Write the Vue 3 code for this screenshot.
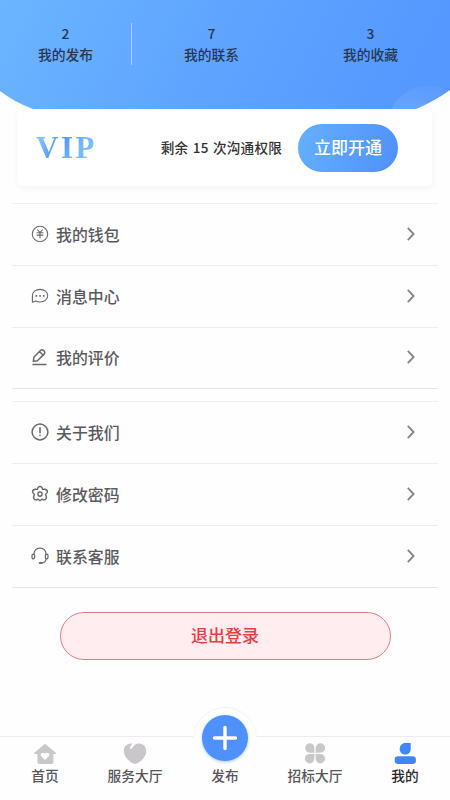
<script setup>
const stats = [
  { value: 2, label: '我的发布' },
  { value: 7, label: '我的联系' },
  { value: 3, label: '我的收藏' },
]
const groups = [
  [
    { icon: 'wallet', label: '我的钱包' },
    { icon: 'message', label: '消息中心' },
    { icon: 'edit', label: '我的评价' },
  ],
  [
    { icon: 'about', label: '关于我们' },
    { icon: 'gear', label: '修改密码' },
    { icon: 'service', label: '联系客服' },
  ],
]
const tabs = [
  { icon: 'home', label: '首页' },
  { icon: 'heart', label: '服务大厅' },
  { icon: 'plus', label: '发布' },
  { icon: 'clover', label: '招标大厅' },
  { icon: 'user', label: '我的', active: true },
]
</script>

<template>
  <div class="page">
    <header class="hero">
      <svg class="hero-bg" width="450" height="109" viewBox="0 0 450 109">
        <defs>
          <linearGradient id="sky" x1="0" y1="0" x2="1" y2="0.12">
            <stop offset="0" stop-color="#6bb5ff" />
            <stop offset="0.5" stop-color="#5fa5ff" />
            <stop offset="1" stop-color="#5598ff" />
          </linearGradient>
          <linearGradient id="bubble" x1="0.5" y1="0" x2="0.3" y2="0.6">
            <stop offset="0" stop-color="#fff" stop-opacity="0.04" />
            <stop offset="1" stop-color="#fff" stop-opacity="0.16" />
          </linearGradient>
          <clipPath id="bowl"><path d="M0 0H450V90Q435 101 416 109H33Q14 102 0 91Z" /></clipPath>
        </defs>
        <g clip-path="url(#bowl)">
          <rect width="450" height="109" fill="url(#sky)" />
          <circle cx="428" cy="127" r="41" fill="url(#bubble)" />
        </g>
      </svg>
      <div v-for="s in stats" :key="s.label" class="stat">
        <span>{{ s.value }}</span>
        <span>{{ s.label }}</span>
      </div>
    </header>

    <section class="vip">
      <span class="vip-logo">VIP</span>
      <span class="vip-text">剩余 15 次沟通权限</span>
      <button class="vip-btn">立即开通</button>
    </section>

    <nav v-for="(group, i) in groups" :key="i" class="menu">
      <div v-for="item in group" :key="item.icon" class="row">
        <svg class="row-icon" width="18" height="18" viewBox="0 0 18 18">
          <g v-if="item.icon === 'wallet'" stroke-width="1.1">
            <circle cx="9" cy="9" r="7.7" />
            <path d="M6.6 4.9L9 7.5l2.4-2.6M6 7.7h6M6 10.1h6M9 7.5v5.3" />
          </g>
          <g v-else-if="item.icon === 'message'" stroke-width="1.1">
            <path d="M1.4 15.2V8.8C1.4 5 4.5 2.4 9 2.4s7.7 2.7 7.7 6.3-3.2 6.3-7.7 6.3c-1.8 0-3-.4-4.4-1.1z" />
            <path d="M5.3 8.9h.1M9 8.9h.1M12.7 8.9h.1" stroke-width="1.8" />
          </g>
          <g v-else-if="item.icon === 'edit'" stroke-width="1.5">
            <path d="M2.3 13.3l.6-4 6.8-7q1.3-1.1 2.7.1l.9.9q1.1 1.3 0 2.6l-6.9 6.8zM8.7 3.8l3.7 3.5M2 16.6h12.8" />
          </g>
          <g v-else-if="item.icon === 'about'" stroke-width="1.5">
            <circle cx="9" cy="9" r="7.9" />
            <path d="M9 4.9v4.8M9 12.3v.2" stroke-width="1.6" />
          </g>
          <g v-else-if="item.icon === 'gear'" stroke-width="1.4">
            <path d="M7 2.4Q9 .4 11 2.4l.5 2 2.2-.1q3 .4 2.7 3.1l-1.8 2 .8 2.3q.3 2.9-2.5 3.4l-2-.9L9 15.7l-1.9-1.5-2 .9q-2.8-.5-2.5-3.4l.8-2.3-1.8-2q-.3-2.7 2.7-3.1l2.2.1z" />
            <circle cx="9" cy="9.1" r="2.1" />
          </g>
          <g v-else stroke-width="1.2">
            <path d="M2.8 7.3C3.2 3.5 5.7 1.2 9 1.2s5.8 2.3 6.2 6.1M15.2 11.8c-.5 2.6-2.2 4-4.7 4.2" />
            <rect x="1" y="7.2" width="2.6" height="4.7" rx="1.3" />
            <rect x="14.4" y="7.2" width="2.6" height="4.7" rx="1.3" />
            <path d="M8.8 16h1.8" stroke-width="2.2" />
          </g>
        </svg>
        <span class="row-label">{{ item.label }}</span>
        <svg class="chevron" width="10" height="16" viewBox="0 0 10 16"><path d="M1.8 1.8L7.6 8l-5.8 6.2" /></svg>
      </div>
    </nav>

    <button class="logout">退出登录</button>

    <footer class="tabs">
      <div v-for="t in tabs" :key="t.icon" class="tab" :class="{ active: t.active }">
        <svg v-if="t.icon === 'home'" class="tab-icon" viewBox="0 0 24 24">
          <path fill-rule="evenodd" d="M10.7 2.7q1.3-1.2 2.6 0l9.4 8.1q1 1.1-.4 1.2h-1.9v8.1q0 2-2 2H6.4q-2 0-2-2V12H1.8q-1.4-.1-.4-1.2zM12 18l3.7-3.7c2-2.5-1.5-5-3.7-2.6-2.2-2.4-5.7.1-3.7 2.6z" />
        </svg>
        <svg v-else-if="t.icon === 'heart'" class="tab-icon" viewBox="0 0 24 24">
          <path d="M9.6 1.6L7.2 5.1q-.7 1.6.5 1.8.9.1 1.6-1.1C11 2.9 13 1.5 16 1.5c4 0 7.3 3 7.3 7.2 0 6.2-5.4 11-10.2 13.1q-1.1.5-2.2 0C6 19.7.8 14.7.8 8.5c0-4.3 3.8-7.7 8.8-6.9z" />
        </svg>
        <svg v-else-if="t.icon === 'clover'" class="tab-icon" viewBox="-.5 0 25 25">
          <path d="M6.8 1.3a4.9 4.9 0 0 1 4.5 5v4.8H6.5a4.9 4.9 0 0 1 .3-9.8zM17.6 1.3a4.9 4.9 0 0 0-4.9 5v4.8h4.9a4.9 4.9 0 0 0 0-9.8zM11.3 12.5v4.7a4.9 4.9 0 1 1-4.8-4.7zM12.7 12.5v4.7a4.9 4.9 0 1 0 4.9-4.7z" />
        </svg>
        <svg v-else-if="t.icon === 'user'" class="tab-icon" viewBox="0 0 24 24">
          <path d="M12.5 1h5.2v5.7c0 3.5-2.2 5.9-5.5 5.9-3.2 0-5.5-2.4-5.5-5.7S9.2 1 12.5 1z" />
          <rect x="1.7" y="14.2" width="21.2" height="7.8" rx="3.3" />
        </svg>
        <span v-else class="publish">
          <svg width="46" height="46" viewBox="0 0 46 46"><path d="M23 12.5v21M12.5 23h21" /></svg>
        </span>
        <span class="tab-label">{{ t.label }}</span>
      </div>
    </footer>
  </div>
</template>

<style>
body {
  background: #fefefe;
}
</style>

<style scoped>
.page {
  width: 450px;
  height: 800px;
  box-sizing: border-box;
  display: flex;
  flex-direction: column;
  overflow: hidden;
  background: #fefefe;
  font-family: "Noto Sans CJK SC", sans-serif;
  font-weight: 500;
}
button {
  font-family: inherit;
  font-weight: 500;
  padding: 0;
}
.hero {
  position: relative;
  flex: none;
  height: 109px;
  box-sizing: border-box;
  padding-top: 23px;
  display: grid;
  grid-template-columns: 132px 159px 159px;
  align-items: start;
}
.hero-bg {
  position: absolute;
  top: 0;
  left: 0;
}
.stat {
  position: relative;
  height: 42px;
  display: flex;
  flex-direction: column;
  align-items: center;
  font-size: 13.8px;
  line-height: 20.5px;
  color: #26384d;
}
.stat:first-of-type {
  border-right: 1px solid #a8d2ff;
}
.vip {
  flex: none;
  height: 77px;
  box-sizing: border-box;
  margin: 0 18px;
  padding: 0 34px 0 18px;
  display: flex;
  align-items: center;
  border-radius: 0 0 5px 5px;
  background: #fff;
  box-shadow: 0 2px 7px rgba(80, 70, 110, 0.06);
  clip-path: inset(0 -12px -12px -12px);
}
.vip-logo {
  font-family: "Liberation Serif", serif;
  font-weight: 700;
  font-size: 31px;
  line-height: 36px;
  letter-spacing: 2.5px;
  background: linear-gradient(120deg, #82c4fa 10%, #5796f5 40%, #74b7fa 65%, #8bc2f8);
  background-clip: text;
  color: transparent;
}
.vip-text {
  margin-left: auto;
  margin-top: -2px;
  font-size: 13.6px;
  letter-spacing: 0.2px;
  word-spacing: 1.1px;
  color: #333;
}
.vip-btn {
  width: 100px;
  height: 48px;
  margin-left: 16px;
  padding-bottom: 2px;
  border: 0;
  border-radius: 24px;
  background: linear-gradient(105deg, #64b0ff, #5090fb);
  color: #fff;
  font-size: 17px;
}
.menu {
  flex: none;
  margin: 17px 12px 0;
  border-top: 1px solid #f1eff4;
}
.menu + .menu {
  margin-top: 12px;
}
.row {
  height: 61.8px;
  box-sizing: border-box;
  padding: 0 22px 0 19px;
  display: flex;
  align-items: center;
  border-bottom: 1px solid #eeecf1;
}
.row:last-child {
  border-bottom-color: #e6e4e9;
}
.row-icon {
  margin-top: -1px;
  fill: none;
  stroke: #6a686c;
  stroke-linecap: round;
  stroke-linejoin: round;
}
.row-label {
  margin-left: 7px;
  font-size: 15.9px;
  color: #5b595e;
}
.chevron {
  margin-left: auto;
  margin-top: -1px;
  fill: none;
  stroke: #89878b;
  stroke-width: 1.9;
}
.logout {
  flex: none;
  align-self: center;
  width: 331px;
  height: 48px;
  margin-top: 24px;
  padding-bottom: 2px;
  border: 1px solid #e77b83;
  border-radius: 25px;
  background: #ffedef;
  color: #e83e43;
  font-size: 17px;
}
.tabs {
  flex: none;
  height: 64px;
  box-sizing: border-box;
  margin-top: auto;
  display: grid;
  grid-template-columns: repeat(5, 1fr);
  border-top: 1px solid #edebf0;
}
.tab {
  position: relative;
  display: flex;
  flex-direction: column;
  align-items: center;
  justify-content: flex-end;
  padding-bottom: 15px;
}
.tab-icon {
  width: 24px;
  height: 24px;
  margin-bottom: -1px;
  fill: #c9c7ca;
}
.tab-label {
  font-size: 13.7px;
  line-height: 20px;
  color: #57555a;
}
.active .tab-icon {
  fill: #3e87f8;
}
.active .tab-label {
  color: #29272c;
}
.publish {
  position: absolute;
  top: -29px;
  left: 13px;
  width: 64px;
  height: 64px;
  box-sizing: border-box;
  padding: 7px 9px 9px;
  border-radius: 50%;
  background: #fefefe;
  box-shadow: 0 -1px 0 #f1eff4;
}
.publish svg {
  display: block;
  border-radius: 50%;
  background: #4e91fc;
  box-shadow: 0 1px 3px rgba(78, 145, 252, 0.5);
  fill: none;
  stroke: #fff;
  stroke-width: 3.4;
  stroke-linecap: round;
}
.publish + .tab-label {
  position: relative;
}
</style>
